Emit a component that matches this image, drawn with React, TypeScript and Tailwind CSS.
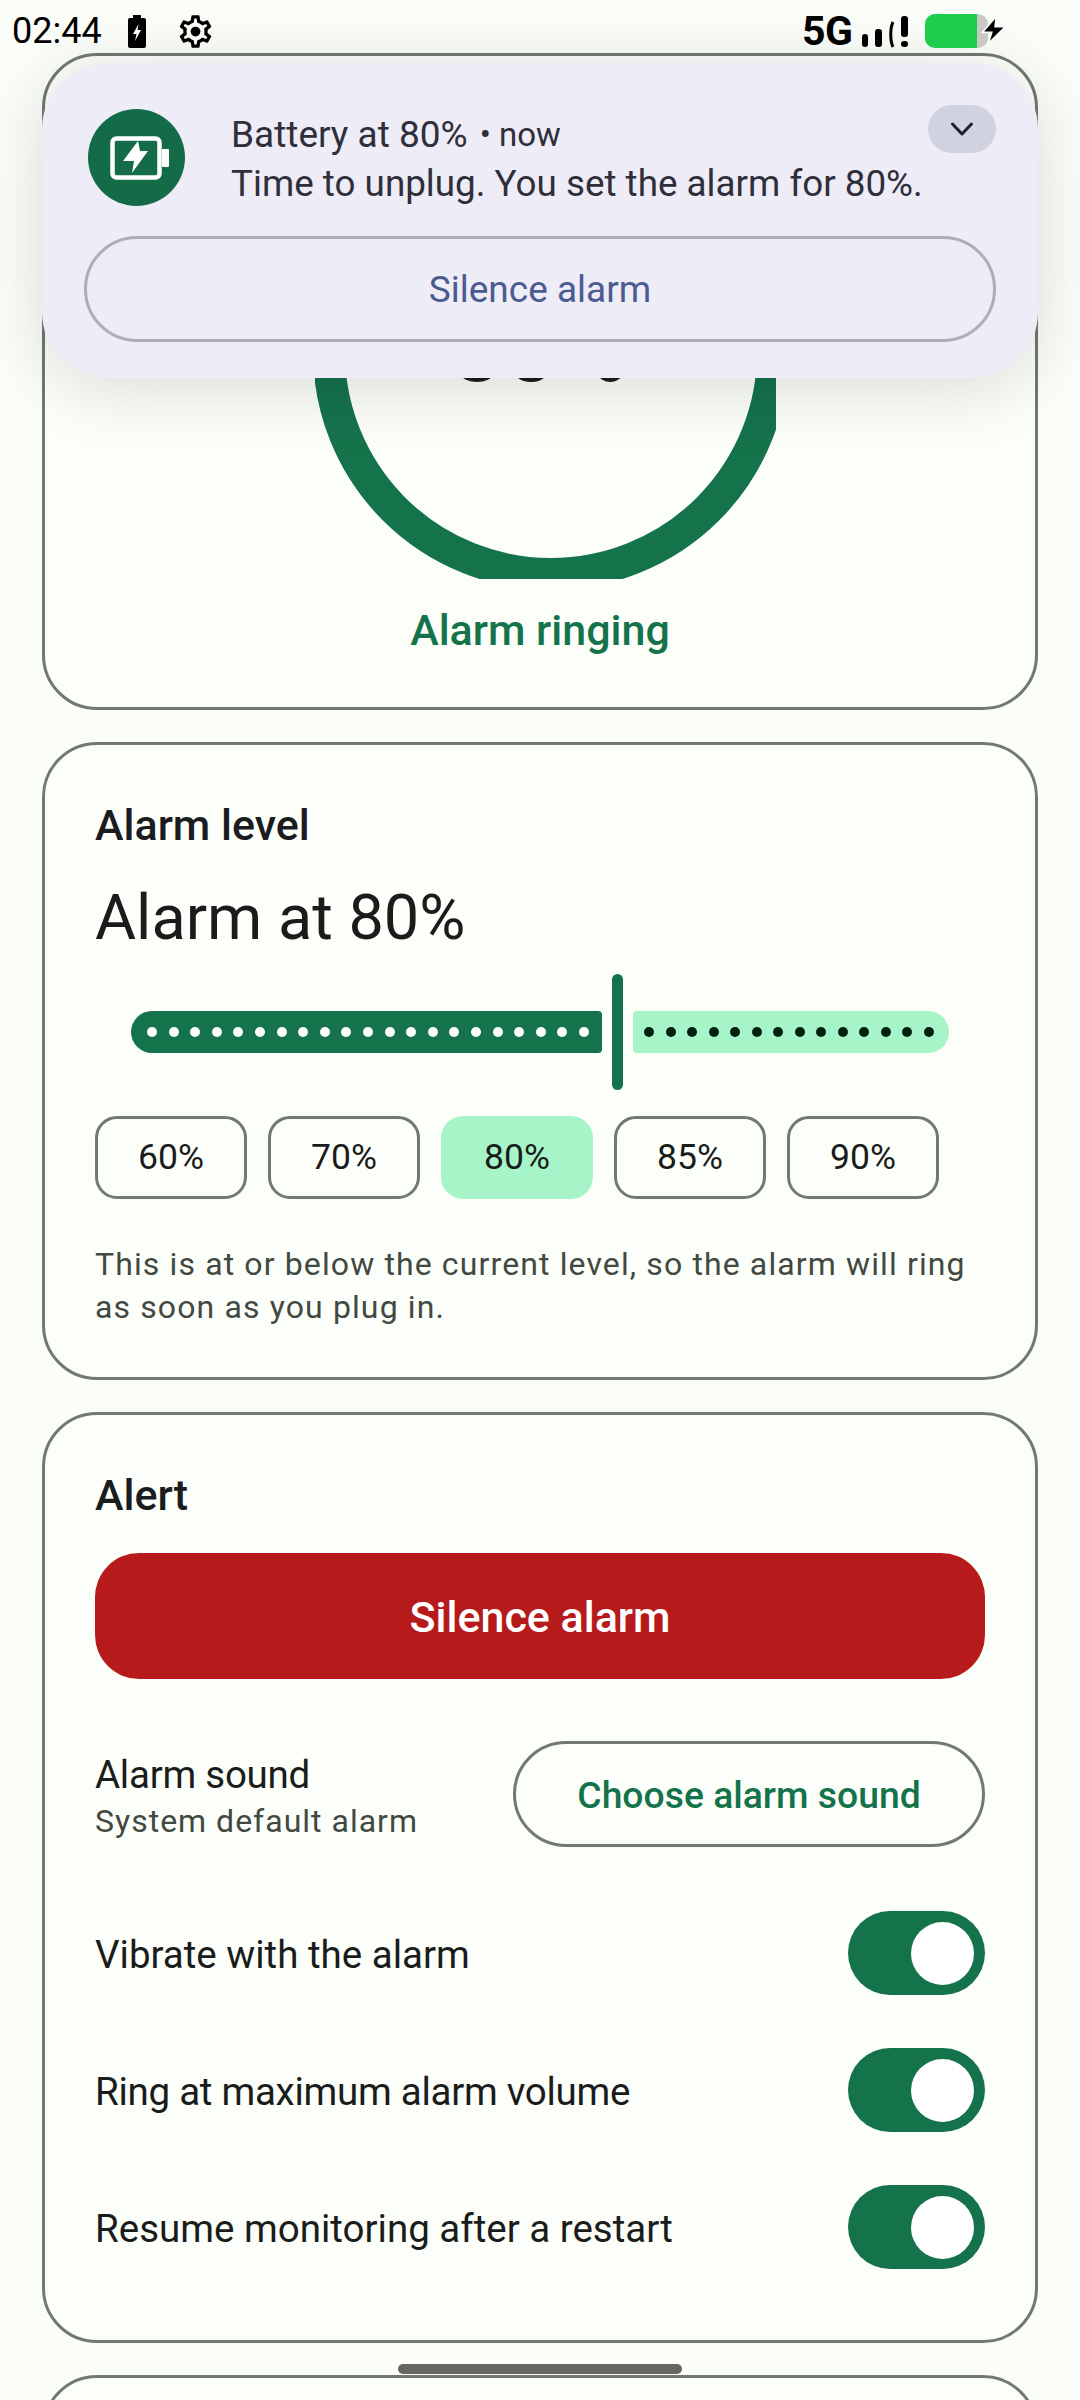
const GEAR = "M19.43 12.98c.04-.32.07-.64.07-.98 0-.34-.03-.66-.07-.98l2.11-1.65c.19-.15.24-.42.12-.64l-2-3.46c-.09-.16-.26-.25-.44-.25-.06 0-.12.01-.17.03l-2.49 1c-.52-.4-1.08-.73-1.69-.98l-.38-2.65C14.46 2.18 14.25 2 14 2h-4c-.25 0-.46.18-.49.42l-.38 2.65c-.61.25-1.17.59-1.69.98l-2.49-1c-.06-.02-.12-.03-.18-.03-.17 0-.34.09-.43.25l-2 3.46c-.13.22-.07.49.12.64l2.11 1.65c-.04.32-.07.65-.07.98 0 .33.03.66.07.98l-2.11 1.65c-.19.15-.24.42-.12.64l2 3.46c.09.16.26.25.44.25.06 0 .12-.01.17-.03l2.49-1c.52.4 1.08.73 1.69.98l.38 2.65c.03.24.24.42.49.42h4c.25 0 .46-.18.49-.42l.38-2.65c.61-.25 1.17-.59 1.69-.98l2.49 1c.06.02.12.03.18.03.17 0 .34-.09.43-.25l2-3.46c.12-.22.07-.49-.12-.64l-2.11-1.65zm-1.98-1.71c.04.31.05.52.05.73 0 .21-.02.43-.05.73l-.14 1.13.89.7 1.08.84-.7 1.21-1.27-.51-1.04-.42-.9.68c-.43.32-.84.56-1.25.73l-1.06.43-.16 1.13-.2 1.35h-1.4l-.19-1.35-.16-1.13-1.06-.43c-.43-.18-.83-.41-1.23-.71l-.91-.7-1.06.43-1.27.51-.7-1.21 1.08-.84.89-.7-.14-1.13c-.03-.31-.05-.54-.05-.74s.02-.43.05-.73l.14-1.13-.89-.7-1.08-.84.7-1.21 1.27.51 1.04.42.9-.68c.43-.32.84-.56 1.25-.73l1.06-.43.16-1.13.2-1.35h1.39l.19 1.35.16 1.13 1.06.43c.43.18.83.41 1.23.71l.91.7 1.06-.43 1.27-.51.7 1.21-1.07.85-.89.7.14 1.13z";

function Toggle() {
  return (
    <div className="flex h-[84px] w-[137px] shrink-0 items-center justify-end rounded-full bg-[#15734c] pr-[11px]">
      <div className="h-[63px] w-[63px] rounded-full bg-white" />
    </div>
  );
}

function SwitchRow({ label, tight }: { label: string; tight?: boolean }) {
  return (
    <div className="flex h-[84px] items-center justify-between">
      <span className={tight ? "mt-[3px] text-[38.5px] tracking-[-0.27px] text-[#191c1a]" : "mt-[3px] text-[38.5px] text-[#191c1a]"}>{label}</span>
      <Toggle />
    </div>
  );
}

function Chip({ label, on }: { label: string; on?: boolean }) {
  return (
    <div
      className={
        on
          ? "flex h-[83px] w-[152px] items-center justify-center rounded-[22px] bg-[#a6f4c8] text-[35.5px] font-[450] text-[#191c1a]"
          : "flex h-[83px] w-[152px] items-center justify-center rounded-[22px] border-[3px] border-[#72796f] text-[35.5px] font-[450] text-[#191c1a]"
      }
    >
      {label}
    </div>
  );
}

function StatusBar() {
  return (
    <div className="absolute left-0 top-0 z-20 flex h-[62px] w-full items-center justify-between pl-[12px] pr-[92px] text-black">
      <div className="flex items-center">
        <span className="text-[36px] leading-[36px]">02:44</span>
        <svg className="ml-[26px]" width="18" height="33" viewBox="0 0 18 33">
          <path d="M5 0h8v3h3a2 2 0 0 1 2 2v26a2 2 0 0 1-2 2H2a2 2 0 0 1-2-2V5a2 2 0 0 1 2-2h3z" fill="#000" />
          <path d="M10.5 9 5 19h3.5L7 26l6-11H9.5z" fill="#fff" />
        </svg>
        <svg className="ml-[30px]" width="39" height="39" viewBox="0 0 24 24">
          <path d={GEAR} fill="#000" />
          <circle cx="12" cy="12" r="3" fill="#000" />
        </svg>
      </div>
      <div className="flex items-center">
        <span className="w-[46px] text-[41px] font-bold leading-[38px] tracking-[-0.5px]">5G</span>
        <svg className="ml-[14px]" width="48" height="33" viewBox="0 0 48 33">
          <rect x="0" y="19" width="6" height="13" rx="3" fill="#000" />
          <rect x="13" y="14" width="7" height="18" rx="3" fill="#000" />
          <path d="M31 7c-3 6-3 19 0 25" fill="none" stroke="#000" strokeWidth="3" />
          <rect x="39" y="1" width="7" height="21" rx="3" fill="#000" />
          <rect x="39" y="26" width="7" height="6" rx="3" fill="#000" />
        </svg>
        <div className="relative ml-[15px] h-[34px] w-[63px] overflow-hidden rounded-[10px] bg-[#c8c8c4]">
          <div className="h-full w-[52px] bg-[#1dce4d]" />
        </div>
        <svg className="absolute right-[72px] top-[15px]" width="28" height="30" viewBox="0 0 24 26">
          <path d="M14 1 2 15h8l-3 10L22 10h-9z" fill="#000" stroke="#fbfdf8" strokeWidth="1.5" />
        </svg>
      </div>
    </div>
  );
}

function Notification() {
  return (
    <div className="absolute left-[42px] top-[63px] z-10 h-[315px] w-[996px] rounded-[66px] bg-[#eeecf6] shadow-[0_10px_70px_rgba(0,0,0,0.14)]">
      <div className="flex items-start pl-[46px] pt-[46px]">
        <div className="flex h-[97px] w-[97px] shrink-0 items-center justify-center rounded-full bg-[#136b48]">
          <svg className="ml-[6px]" width="60" height="44" viewBox="0 0 60 44">
            <rect x="2.5" y="2.5" width="47" height="39" rx="4" fill="none" stroke="#fff" strokeWidth="4.5" />
            <rect x="52" y="13" width="7" height="18" rx="1" fill="#fff" />
            <path d="M28 5 13 25h11l-2 12 16-22h-8z" fill="#fff" />
          </svg>
        </div>
        <div className="ml-[46px] text-[#2e2f3a]">
          <div className="mt-[1px] flex h-[49px] items-center whitespace-nowrap">
            <span className="text-[37px]">Battery at 80%</span>
            <span className="ml-[12px] text-[33px]">• now</span>
          </div>
          <div className="whitespace-nowrap text-[36.8px] leading-[49px]">Time to unplug. You set the alarm for 80%.</div>
        </div>
      </div>
      <div className="absolute left-[42px] top-[173px] flex h-[106px] w-[912px] items-center justify-center rounded-full border-[3px] border-[#aeadbd] pt-[2px] text-[37px] text-[#4c5a92]">
        Silence alarm
      </div>
      <div className="absolute right-[42px] top-[42px] flex h-[48px] w-[68px] items-center justify-center rounded-full bg-[#d0d2e0]">
        <svg width="24" height="16" viewBox="0 0 24 16">
          <path d="M2.5 3 12 13 21.5 3" fill="none" stroke="#1e2030" strokeWidth="3" strokeLinecap="round" strokeLinejoin="round" />
        </svg>
      </div>
    </div>
  );
}

export default function App() {
  return (
    <div className="relative h-[2400px] w-[1080px] overflow-hidden bg-[#fbfdf8] [font-family:Roboto,sans-serif]">
      <StatusBar />
      <Notification />

      <div className="flex flex-col gap-[32px] px-[42px] pt-[53px]">
        <section className="h-[657px] rounded-[55px] border-[3px] border-[#72796f] bg-[#fcfef9]">
          <div className="relative ml-[270px] mt-[52px] h-[471px] w-[461px] overflow-hidden">
            <svg width="461" height="471" viewBox="0 0 461 471">
              <circle cx="236" cy="244" r="222" fill="none" stroke="#15734c" strokeWidth="32" />
            </svg>
            <div className="absolute left-[135px] top-[184px] text-[96px] leading-[112px] text-[#191c1a]">80%</div>
          </div>
          <div className="mt-[26px] text-center text-[43px] font-medium leading-[50px] text-[#15734c]">Alarm ringing</div>
        </section>

        <section className="h-[638px] rounded-[55px] border-[3px] border-[#72796f] bg-[#fcfef9] px-[50px] pt-[55px]">
          <div className="text-[43px] font-medium leading-[50px] text-[#1a1c20]">Alarm level</div>
          <div className="mt-[28px] text-[63px] leading-[80px] text-[#191c1a]">Alarm at 80%</div>
          <div className="mt-[16px] flex h-[116px] items-center pl-[36px]">
            <div className="flex h-[42px] w-[471px] items-center justify-between rounded-l-[21px] rounded-r-[4px] bg-[#15734c] pl-[16px] pr-[13px]">
              {Array.from({ length: 21 }).map((_, i) => (
                <span key={i} className="h-[10px] w-[10px] rounded-full bg-white" />
              ))}
            </div>
            <div className="ml-[10px] h-[116px] w-[11px] rounded-full bg-[#15734c]" />
            <div className="ml-[10px] flex h-[42px] w-[316px] items-center justify-between rounded-l-[4px] rounded-r-[21px] bg-[#a6f4c8] pl-[11px] pr-[15px]">
              {Array.from({ length: 14 }).map((_, i) => (
                <span key={i} className="h-[10px] w-[10px] rounded-full bg-[#00210f]" />
              ))}
            </div>
          </div>
          <div className="mt-[26px] flex gap-[21px]">
            <Chip label="60%" />
            <Chip label="70%" />
            <Chip label="80%" on />
            <Chip label="85%" />
            <Chip label="90%" />
          </div>
          <p className="mt-[44px] text-[32px] leading-[43px] tracking-[1.12px] text-[#414941]">
            This is at or below the current level, so the alarm will ring<br />as soon as you plug in.
          </p>
        </section>

        <section className="h-[931px] rounded-[55px] border-[3px] border-[#72796f] bg-[#fcfef9] px-[50px] pt-[55px]">
          <div className="text-[43px] font-medium leading-[50px] text-[#1a1c20]">Alert</div>
          <div className="mt-[33px] flex h-[126px] items-center justify-center rounded-[44px] bg-[#b71a1a] pt-[2px] text-[43px] font-medium text-white">
            Silence alarm
          </div>
          <div className="mt-[62px] flex h-[106px] items-center justify-between">
            <div className="pt-[5px]">
              <div className="text-[38.5px] leading-[46px] tracking-[-0.25px] text-[#191c1a]">Alarm sound</div>
              <div className="mt-[2px] text-[32px] leading-[42px] tracking-[1px] text-[#414941]">System default alarm</div>
            </div>
            <div className="flex h-[106px] w-[472px] items-center justify-center rounded-full border-[3px] border-[#72796f] pt-[3px] text-[37.3px] font-medium text-[#15734c]">
              Choose alarm sound
            </div>
          </div>
          <div className="mt-[64px] flex flex-col gap-[53px]">
            <SwitchRow label="Vibrate with the alarm" />
            <SwitchRow label="Ring at maximum alarm volume" tight />
            <SwitchRow label="Resume monitoring after a restart" />
          </div>
        </section>

        <section className="h-[200px] rounded-[55px] border-[3px] border-[#72796f] bg-[#fcfef9]" />
      </div>

      <div className="absolute left-[398px] top-[2364px] z-20 h-[10px] w-[284px] rounded-full bg-[#666664]" />
    </div>
  );
}
